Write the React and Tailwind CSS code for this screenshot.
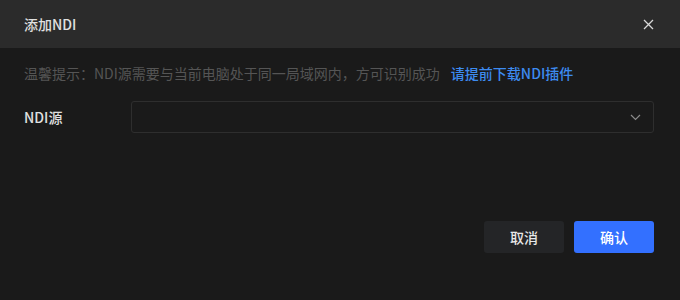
const font = {
  fontFamily: '"Noto Sans CJK SC", "Noto Sans", sans-serif',
};

export default function App() {
  return (
    <div className="w-[680px] h-[300px] bg-[#1a1a1a] flex flex-col" style={font}>
      <div className="h-12 bg-[#2b2b2b] flex items-center justify-between pl-6 pr-[26px]">
        <span className="text-sm text-[#e0e0e0] font-medium">添加NDI</span>
        <svg width="11" height="11" viewBox="0 0 11 11" fill="none" stroke="#d8d8d8" strokeWidth="1.3">
          <path d="M1 1L10 10M10 1L1 10" />
        </svg>
      </div>
      <div className="pl-6 pr-[26px] pt-[15px] flex flex-col">
        <div className="text-sm leading-5 flex">
          <span className="text-[#555555]">温馨提示：NDI源需要与当前电脑处于同一局域网内，方可识别成功</span>
          <span className="text-[#3d8bf0] ml-[11px] font-medium">请提前下载NDI插件</span>
        </div>
        <div className="flex items-center mt-[18px]">
          <span className="w-[107px] text-sm text-[#e0e0e0] font-medium">NDI源</span>
          <div className="flex-1 h-8 border border-[#2e2e2e] rounded-[3px] flex items-center justify-end pr-3">
            <svg width="11" height="7" viewBox="0 0 11 7" fill="none" stroke="#8a8a8a" strokeWidth="1.2">
              <path d="M1 1L5.5 5.5L10 1" />
            </svg>
          </div>
        </div>
        <div className="flex justify-end gap-[10px] mt-[88px]">
          <button className="w-20 h-8 rounded-[3px] bg-[#242527] text-sm text-[#e8e8e8] font-medium">取消</button>
          <button className="w-20 h-8 rounded-[3px] bg-[#3370ff] text-sm text-white font-medium">确认</button>
        </div>
      </div>
    </div>
  );
}
